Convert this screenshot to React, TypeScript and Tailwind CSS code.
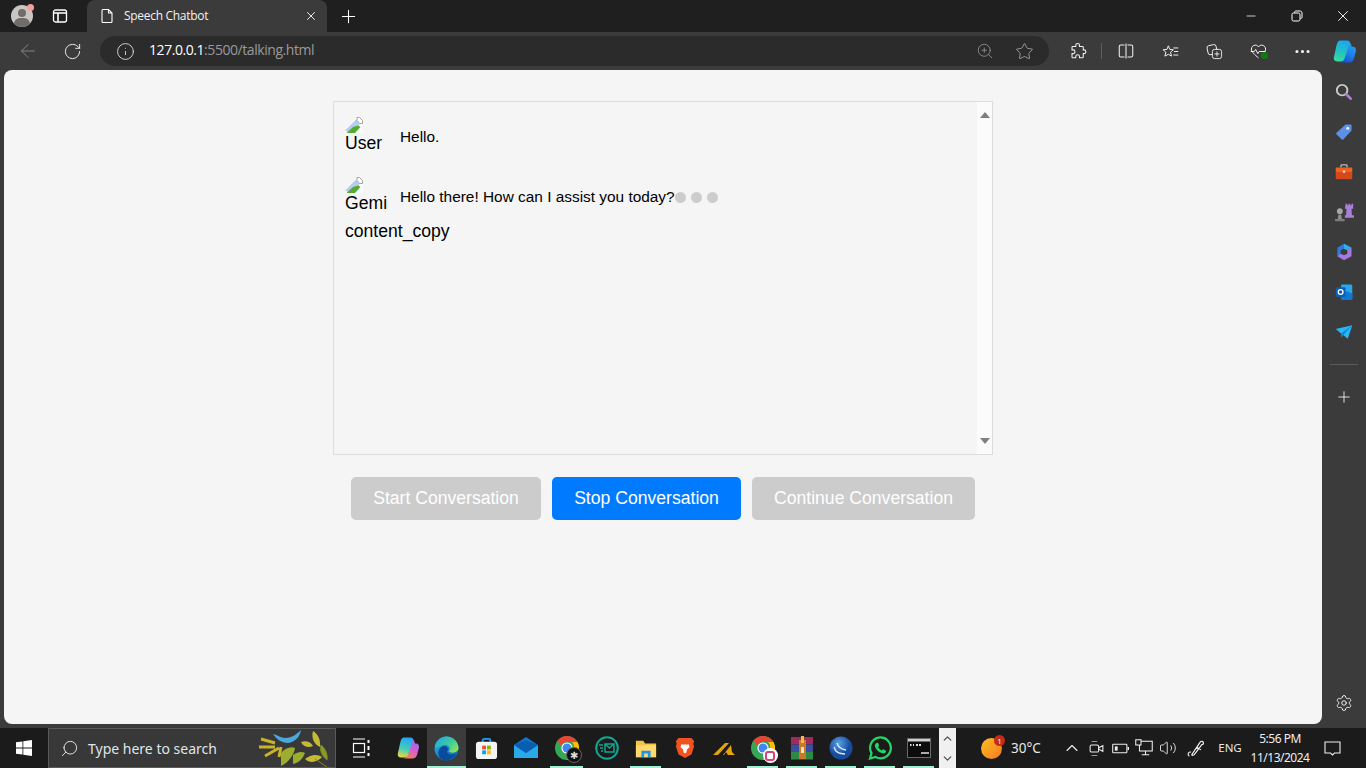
import React from "react";
import { ArrowLeft, RotateCw, Info, ZoomIn, Star, Plus, X, Minus, Search, Settings, Ellipsis, ChevronUp, ChevronDown, Volume2 } from "lucide-react";

const S = ({ w = 24, h, vb = "0 0 24 24", children, className }: { w?: number; h?: number; vb?: string; children: React.ReactNode; className?: string }) => (
  <svg width={w} height={h ?? w} viewBox={vb} className={"block shrink-0 " + (className ?? "")} fill="none">{children}</svg>
);

const BLADE_L = "M8 1.5h6.5c2 0 2.800 1 2.300 3L12 19c-.6 2-2 2.500-3.500 2.500H5c-2.500 0-3.800-1.800-3.200-4L4.500 5.500C5.200 3 6.300 1.500 8 1.500z";
const BLADE_R = "M15 2.500c1.500 0 2.800.8 3.300 2.500l.7 2.500h1c2.200 0 3.500 2 3 4l-2 7.500c-.7 2.500-2.500 3.500-4.500 3.500H7c2 0 4-1 4.700-3.500l3.800-13c.4-1.300 0-2.500-.5-3z";

function CopilotLogo({ size = 24, colorful }: { size?: number; colorful?: boolean }) {
  const a = colorful ? "cpa2" : "cpa";
  const b = colorful ? "cpb2" : "cpb";
  return (
    <S w={size}>
      <defs>
        <linearGradient id={a} x1="0.5" y1="0" x2="0.3" y2="1">
          <stop offset="0" stopColor={colorful ? "#2aa5f5" : "#1ba8ee"} />
          <stop offset=".55" stopColor={colorful ? "#3ed0b8" : "#22c3c0"} />
          <stop offset="1" stopColor={colorful ? "#f5d33c" : "#3cdc9c"} />
        </linearGradient>
        <linearGradient id={b} x1="0.7" y1="0" x2="0.3" y2="1">
          <stop offset="0" stopColor={colorful ? "#8a6df0" : "#2f9ff5"} />
          <stop offset=".55" stopColor={colorful ? "#d85fd0" : "#1e7fe8"} />
          <stop offset="1" stopColor={colorful ? "#f7804a" : "#1450d8"} />
        </linearGradient>
      </defs>
      <path d={BLADE_R} fill={`url(#${b})`} />
      <path d={BLADE_L} fill={`url(#${a})`} />
    </S>
  );
}

function EdgeLogo() {
  return (
    <S w={25}>
      <defs>
        <linearGradient id="edg" x1="0" y1="0" x2="0.8" y2="1"><stop offset="0" stopColor="#2cb5ee" /><stop offset="1" stopColor="#0d66b8" /></linearGradient>
        <linearGradient id="edt" x1="0" y1="0" x2="1" y2="0.7"><stop offset="0" stopColor="#1fa8e8" /><stop offset=".6" stopColor="#3cc9a0" /><stop offset="1" stopColor="#86e25c" /></linearGradient>
      </defs>
      <circle cx="12" cy="12" r="11.500" fill="url(#edg)" />
      <path d="M1 11C2 5 7 .5 12 .5c6 0 10.500 4.500 11.500 10 .4 3-2 5.500-5.500 5.500-2.500 0-4-1-4-1.500 1-.8 1.500-2 1-3.200C14 9 11 7.500 7.500 9 5 10 2.500 11 1 11z" fill="url(#edt)" />
      <path d="M9 23c-3.500-1.500-5.300-4.500-4.800-8 .5-3 3-5.500 5.800-5.500 2 0 3.500 1.500 3.500 3 0 1-.7 1.300-1 2-.4 2.500 3 3.500 5 3.500 1.500 0 3-.4 3.800-.9-2 3.900-5.800 6.200-9.300 6.400-1 .1-2 0-3-.5z" fill="#0a4a9a" />
    </S>
  );
}

function ChromeLogo({ badge }: { badge?: React.ReactNode }) {
  return (
    <div className="relative w-6 h-6">
      <S w={24}>
        <circle cx="12" cy="12" r="12" fill="#34a853" />
        <path d="M12 0a12 12 0 0 1 10.400 6H12a6 6 0 0 0-5.600 3.900L2.500 4.700A12 12 0 0 1 12 0z" fill="#ea4335" />
        <path d="M22.400 6A12 12 0 0 1 12 24l5.200-9A6 6 0 0 0 17 6z" fill="#fbbc04" />
        <circle cx="12" cy="12" r="5.600" fill="#fff" />
        <circle cx="12" cy="12" r="4.500" fill="#4285f4" />
      </S>
      {badge}
    </div>
  );
}

function BrokenImage() {
  return (
    <S w={18} h={16} vb="0 0 18 16">
      <path d="M0 16V12L11 1h3l4 4v11z" fill="#fbfbfd" />
      <path d="M0 13.500L11 2.500l3.500 3.500-.5 3L3 15z" fill="#b6cdf2" />
      <path d="M1.500 16L8 10l5-1.500 2.500 1.500L10 16z" fill="#55ab32" />
      <path d="M12 0.500h2.500l3 3v3h-3l-2.500-3z" fill="#fff" stroke="#9a9a9a" strokeWidth=".9" />
    </S>
  );
}

function Avatar({ alt }: { alt: string }) {
  return (
    <div className="w-[43px] h-10 overflow-hidden shrink-0 text-[17.6px] leading-[20px] text-black">
      <BrokenImage />
      <div className="whitespace-nowrap">{alt}</div>
    </div>
  );
}

function TabStrip() {
  return (
    <div className="h-8 bg-[#1f1f1f] flex items-stretch text-white shrink-0">
      <div className="w-[44px] flex items-center justify-center relative">
        <div className="relative w-[22px] h-[22px] rounded-full bg-[#c9c6c2] overflow-hidden">
          <div className="w-2 h-2 rounded-full bg-[#6f6d6b] mx-auto mt-1" />
          <div className="w-4 h-3 rounded-full bg-[#6f6d6b] mx-auto mt-[1px]" />
        </div>
        <span className="absolute left-[27px] top-[4px] w-[7px] h-[7px] rounded-full bg-[#f3a09c]" />
      </div>
      <div className="w-[43px] flex items-center">
        <S w={16} vb="0 0 16 16" className="ml-[8px]">
          <rect x="1.500" y="2" width="13" height="12" rx="2" stroke="#fff" strokeWidth="1.300" />
          <path d="M2 5h12M6 5v8.500" stroke="#fff" strokeWidth="1.600" />
        </S>
      </div>
      <div className="w-[240px] bg-[#3b3b3b] rounded-t-lg flex items-center pl-[12px] pr-[9px]">
        <S w={16} vb="0 0 16 16">
          <path d="M3 2.500c0-.6.4-1 1-1h5.500L13 5v8.500c0 .6-.4 1-1 1H4c-.6 0-1-.4-1-1z M9.500 1.500V5H13" stroke="#fff" strokeWidth="1.100" />
        </S>
        <span className="ml-[9px] text-[12px] tracking-[-0.3px] font-['Open_Sans','Noto_Sans',sans-serif] text-[#f2f2f2] flex-1">Speech Chatbot</span>
        <X size={14} strokeWidth={1.700} color="#eee" />
      </div>
      <div className="w-[42px] flex items-center justify-center">
        <Plus size={21} strokeWidth={1.200} color="#fff" />
      </div>
      <div className="flex-1" />
      <div className="flex items-center">
        <div className="w-[46px] flex justify-center"><Minus size={14} strokeWidth={1.300} color="#fff" /></div>
        <div className="w-[46px] flex justify-center">
          <S w={12} vb="0 0 12 12"><rect x="1" y="3" width="8" height="8" rx="1.500" stroke="#fff" /><path d="M3.500 3V2.500C3.500 1.500 4 1 5 1h4c1.200 0 2 .8 2 2v4c0 1-.5 1.500-1.500 1.500" stroke="#fff" /></S>
        </div>
        <div className="w-[46px] flex justify-center"><X size={18} strokeWidth={1.200} color="#fff" /></div>
      </div>
    </div>
  );
}

function Toolbar() {
  return (
    <div className="h-[38px] bg-[#3b3b3b] flex items-center shrink-0 pl-[6px]">
      <div className="w-11 shrink-0 flex justify-center"><ArrowLeft size={22} strokeWidth={1} color="#8a8a8a" /></div>
      <div className="w-11 shrink-0 flex justify-center"><RotateCw size={19} strokeWidth={1.200} color="#f0f0f0" /></div>
      <div className="ml-[6px] w-[949px] shrink-0 h-[30px] rounded-full bg-[#2b2b2b] flex items-center pl-[16px] pr-[15px]">
        <Info size={19} strokeWidth={1.100} color="#e6e6e6" />
        <span className="ml-[14px] text-[14px] leading-[18px] -mt-[2px] font-['Open_Sans','Noto_Sans',sans-serif] tracking-[-0.44px] flex-1">
          <span className="text-white">127.0.0.1</span><span className="text-[#9a9a9a]">:5500/talking.html</span>
        </span>
        <ZoomIn size={18} strokeWidth={1} color="#a0a0a0" />
        <Star size={19} strokeWidth={1} color="#b0b0b0" className="ml-[21px]" />
      </div>
      <div className="ml-[6px] flex items-center shrink-0">
        <div className="w-[46px] flex justify-center">
          <S w={18}><path d="M9 4.500a2.500 2.500 0 0 1 5 0V6h4a1 1 0 0 1 1 1v3.500h1a2.500 2.500 0 0 1 0 5h-1V20a1 1 0 0 1-1 1h-4v-1.500a2.500 2.500 0 0 0-5 0V21H5a1 1 0 0 1-1-1v-4.500h1.500a2.500 2.500 0 0 0 0-5H4V7a1 1 0 0 1 1-1h4z" stroke="#f0f0f0" strokeWidth="1.400" /></S>
        </div>
        <div className="w-px h-[16px] bg-[#5e5e5e]" />
        <div className="w-[46px] flex justify-center pl-[2px]">
          <S w={18}><path d="M10 4H5a2 2 0 0 0-2 2v12a2 2 0 0 0 2 2h5M14 4h5a2 2 0 0 1 2 2v12a2 2 0 0 1-2 2h-5M12 2v20" stroke="#f0f0f0" strokeWidth="1.400" /></S>
        </div>
        <div className="w-[44px] flex justify-center">
          <S w={17}><path d="M9 4l2 5 5 .5-4 3.500 1.500 5.500L9 16l-5 2.500L5.500 13 1.500 9.500 7 9z" stroke="#f0f0f0" strokeWidth="1.400" /><path d="M16 7h7M17 12h6M16 17h7" stroke="#f0f0f0" strokeWidth="1.400" /></S>
        </div>
        <div className="w-[44px] flex justify-center">
          <S w={17}><rect x="2" y="3" width="13" height="13" rx="3" stroke="#f0f0f0" strokeWidth="1.300" transform="rotate(-12 8 9)" /><rect x="9" y="9" width="13" height="13" rx="3" fill="#3b3b3b" stroke="#f0f0f0" strokeWidth="1.300" /><path d="M15.500 12v7M12 15.500h7" stroke="#f0f0f0" strokeWidth="1.300" /></S>
        </div>
        <div className="w-[44px] flex justify-center relative">
          <S w={17}><path d="M12 21C6 16 2 12.500 2 8.500 2 5.500 4.500 3 7.500 3 9.500 3 11 4 12 5.500 13 4 14.500 3 16.500 3 19.500 3 22 5.500 22 8.500c0 1-.2 2-.7 3" stroke="#f0f0f0" strokeWidth="1.400" /><path d="M1 12h5l2-3 3 6 2-3h9" stroke="#f0f0f0" strokeWidth="1.400" /></S>
          <span className="absolute left-[25px] top-[9px] w-[7px] h-[7px] rounded-full bg-[#107c10]" />
        </div>
        <div className="w-[44px] flex justify-center"><Ellipsis size={19} strokeWidth={2} color="#f0f0f0" /></div>
        <div className="w-[40px] flex justify-center"><CopilotLogo size={25} /></div>
      </div>
    </div>
  );
}

function Sidebar() {
  const Slot = ({ children }: { children: React.ReactNode }) => <div className="h-10 flex items-center justify-center">{children}</div>;
  return (
    <div className="w-[44px] bg-[#3b3b3b] flex flex-col items-center pt-[2px] pb-[1px]">
      <Slot><S w={18}><circle cx="9.500" cy="9.500" r="7" stroke="#c9c9c9" strokeWidth="2.600" /><path d="M15 15l6 6" stroke="#b07ae0" strokeWidth="3.400" strokeLinecap="round" /></S></Slot>
      <Slot><S w={18}><path d="M14 2h7c.6 0 1 .4 1 1v7L11 22c-.6.600-1.400.600-2 0L2 15c-.6-.6-.6-1.400 0-2z" fill="#5b8fe8" /><circle cx="17" cy="7" r="2" fill="#e8f0ff" /></S></Slot>
      <Slot><S w={18}><path d="M8 6V3.500C8 3 8.500 2.500 9 2.500h6c.5 0 1 .5 1 1V6" stroke="#b8b8b8" strokeWidth="1.800" /><path d="M1 6h22v6H1z" fill="#f0631f" /><path d="M1 12h22v8c0 1-.5 1.500-1.500 1.500h-19C1.500 21.500 1 21 1 20z" fill="#d4481a" /><rect x="10.500" y="10" width="3" height="3" fill="#ddd" /></S></Slot>
      <Slot><S w={20}><circle cx="7" cy="11" r="3.500" fill="#a6a6a6" /><path d="M4.500 21c0-3 1-5 1-6h3c0 1 1 3 1 6z" fill="#8f8f8f" /><rect x="1" y="20.500" width="12" height="2.500" rx="1" fill="#7e7e7e" /><path d="M14 2h2v2h1.500V2h2v2H21V2h2v6h-2l.5 8h-7l.5-8h-2zM13 16h11v3H13z" fill="#a880dc" /></S></Slot>
      <Slot>
        <S w={20}>
          <path d="M12 2l9 5-5 3-4-2-4 2v5l-4 2.500V7z" fill="#2f78e0" />
          <path d="M21 7v10l-9 5-8-5 4-3 4 2 4-2v-4z" fill="#a678e2" />
          <path d="M12 2l9 5-5 3-4-2z" fill="#2bb0ee" />
        </S>
      </Slot>
      <Slot>
        <S w={18}>
          <rect x="8" y="2" width="15" height="20" rx="1.500" fill="#28a8ea" />
          <path d="M8 14l7.500-3 7.500 3v8H8z" fill="#0f78d4" />
          <rect x="1" y="5.500" width="13" height="13" rx="1.500" fill="#0a5eb0" />
          <circle cx="7.500" cy="12" r="3.200" stroke="#fff" strokeWidth="1.700" />
        </S>
      </Slot>
      <Slot><S w={18}><path d="M1 8L23 3 17 21l-6-5-3 3v-5z" fill="#29b6f6" /><path d="M8 14L23 3l-12 13-3 3z" fill="#0c86cf" /></S></Slot>
      <div className="w-7 h-px bg-[#5a5a5a] mt-3" />
      <div className="h-10 mt-[12px] flex items-center justify-center"><Plus size={18} strokeWidth={1.200} color="#eee" /></div>
      <div className="flex-1" />
      <Slot><Settings size={18} strokeWidth={1.300} color="#eee" /></Slot>
    </div>
  );
}

function ChatPage() {
  const Btn = ({ label, active, w }: { label: string; active?: boolean; w: string }) => (
    <div className={"h-[43px] rounded-[5px] flex items-center justify-center text-white text-[17.6px] " + w + " " + (active ? "bg-[#007bff]" : "bg-[#cccccc]")}>{label}</div>
  );
  return (
    <div className="flex-1 bg-[#f5f5f5] rounded-lg ml-[4px] flex flex-col items-center pt-[31px] font-['Liberation_Sans',Arial,sans-serif]">
      <div className="w-[660px] h-[354px] border border-[#dddddd] flex">
        <div className="flex-1 pl-[11px] pt-[15px]">
          <div className="flex items-center h-10">
            <Avatar alt="User" />
            <span className="ml-[12px] text-[15.4px] text-black">Hello.</span>
          </div>
          <div className="flex items-center h-10 mt-5">
            <Avatar alt="Gemini" />
            <span className="ml-[12px] text-[15.4px] text-black">Hello there! How can I assist you today?</span>
            <span className="flex items-center gap-[5.4px]">
              <span className="w-[11px] h-[11px] rounded-full bg-[#cccccc]" />
              <span className="w-[11px] h-[11px] rounded-full bg-[#cccccc]" />
              <span className="w-[11px] h-[11px] rounded-full bg-[#cccccc]" />
            </span>
          </div>
          <div className="text-[17.6px] leading-[20px] text-black mt-[4px]">content_copy</div>
        </div>
        <div className="w-[15px] bg-[#fbfbfb] flex flex-col justify-between items-center py-[10px]">
          <div className="w-0 h-0 border-l-[5px] border-r-[5px] border-b-[6px] border-l-transparent border-r-transparent border-b-[#7f7f7f]" />
          <div className="w-0 h-0 border-l-[5px] border-r-[5px] border-t-[6px] border-l-transparent border-r-transparent border-t-[#7f7f7f]" />
        </div>
      </div>
      <div className="flex gap-[11px] mt-[22px]">
        <Btn label="Start Conversation" w="w-[190px]" />
        <Btn label="Stop Conversation" active w="w-[189px]" />
        <Btn label="Continue Conversation" w="w-[223px]" />
      </div>
    </div>
  );
}

function Slot({ w = "w-[39px]", line, active, children }: { w?: string; line?: boolean; active?: boolean; children: React.ReactNode }) {
  return (
    <div className={"relative h-full flex items-center justify-center shrink-0 " + w + (active ? " bg-[#3c3c3c]" : "")}>
      {children}
      {line && <span className={"absolute bottom-0 h-[2px] bg-[#9ff0d2] " + (active ? "left-0 right-0" : "left-[4px] right-[4px]")} />}
    </div>
  );
}

function Tray({ children, w = "w-6" }: { children: React.ReactNode; w?: string }) {
  return <div className={"flex items-center justify-center shrink-0 " + w}>{children}</div>;
}

function Taskbar() {
  return (
    <div className="h-[40px] bg-[#1b1b1b] flex items-stretch shrink-0 font-['Open_Sans','Noto_Sans',sans-serif] text-white">
      <div className="w-[48px] shrink-0 flex items-center justify-center">
        <S w={16} vb="0 0 16 16"><path d="M0 2.300l6.500-.9v6.200H0zM7.300 1.300L16 0v7.600H7.300zM0 8.400h6.500v6.200L0 13.700zM7.300 8.400H16V16l-8.700-1.200z" fill="#fff" /></S>
      </div>
      <div className="w-[288px] shrink-0 bg-[#383838] border border-[#5a5a5a] flex items-center pl-[11px] overflow-hidden">
        <Search size={19} strokeWidth={1.200} color="#e8e8e8" className="-scale-x-100" />
        <span className="ml-[9px] text-[14px] text-[#dfe5ea] font-['Noto_Sans','Open_Sans',sans-serif]">Type here to search</span>
        <div className="flex-1" />
        <svg width="72" height="38" viewBox="0 0 72 38" className="block shrink-0 mr-[4px]" fill="none">
          <path d="M14 5c5 1 8 4 12 4 6 0 11-3 16-8-1 7-6 12-13 13-6 0-12-4-15-9z" fill="#4aa8dc" />
          <path d="M2 10l14 4M0 18l16 0M6 27l14-8M22 18l-2 10" stroke="#c8b42a" strokeWidth="3" />
          <path d="M22 24c4-5 10-7 14-5-1 7-7 15-14 18zM34 26c4-3 9-4 12-2-2 5-6 10-12 11z" fill="#9cae2f" />
          <path d="M54 2c5 3 8 9 7 16-6-3-9-9-7-16zM46 30c6-5 13-5 17-2-4 5-12 7-17 2zM42 13c5-2 10 0 12 4-4 2-10 1-12-4z" fill="#c6b934" />
          <path d="M62 16c4 3 7 9 6 15-4-3-8-9-6-15zM56 30l12 8" stroke="#7a8a20" fill="#8a9a24" />
        </svg>
      </div>
      <div className="w-[50px] mr-[2px] shrink-0 flex items-center justify-center">
        <S w={20} vb="0 0 20 20"><path d="M2 1h12M2 19h12" stroke="#fff" strokeWidth="1.200" /><rect x="2.500" y="5.500" width="11" height="9" stroke="#fff" strokeWidth="1.200" /><path d="M17.500 2v3M17.500 8v4M17.500 15v3" stroke="#fff" strokeWidth="2" /></S>
      </div>
      <Slot><CopilotLogo colorful /></Slot>
      <Slot active line><EdgeLogo /></Slot>
      <Slot w="w-[40px]">
        <S w={23}><path d="M8 6V3.500C8 2.500 9 2 10 2h4c1 0 2 .5 2 1.500V6" stroke="#1da1f2" strokeWidth="1.800" /><rect x="1" y="5" width="22" height="18" rx="3" fill="#f4f4f4" /><rect x="7.500" y="9" width="4" height="4" fill="#f25022" /><rect x="12.500" y="9" width="4" height="4" fill="#7fba00" /><rect x="7.500" y="14" width="4" height="4" fill="#00a4ef" /><rect x="12.500" y="14" width="4" height="4" fill="#ffb900" /></S>
      </Slot>
      <Slot w="w-[40px]">
        <S w={24}><path d="M0 9L12 1l12 8v13H0z" fill="#0f78d4" /><path d="M0 9l12 8 12-8v13H0z" fill="#29a8ea" /><path d="M0 9l12 8 12-8-12-5z" fill="#0a5eb0" /></S>
      </Slot>
      <Slot w="w-[41px]" line>
        <ChromeLogo badge={<span className="absolute -right-[3px] -bottom-[3px] w-[16px] h-[16px] rounded-full bg-[#111] border border-[#666] flex items-center justify-center text-[10px] text-[#ddd]">✱</span>} />
      </Slot>
      <Slot>
        <S w={24}><circle cx="12" cy="12" r="10.800" stroke="#12a593" strokeWidth="2" /><path d="M10 8h9v8h-9zM10 8l4.500 4 4.500-4M4 9h4M5 12h3M6 15h2" stroke="#12a593" strokeWidth="1.500" /></S>
      </Slot>
      <Slot line>
        <S w={22}><path d="M1 4h8l2 3h12v15H1z" fill="#f5c542" /><path d="M1 9h22v13H1z" fill="#ffd970" /><rect x="7" y="15" width="10" height="7" fill="#1c97e6" /><rect x="10" y="18" width="4" height="4" fill="#ffd970" /></S>
      </Slot>
      <Slot>
        <S w={22}><path d="M5 1h14l3 3.500-1 3 1 2.500-3 9-7 4-7-4-3-9 1-2.500-1-3z" fill="#f2521f" /><path d="M8 8l3 .5 1-1 1 1 3-.5 1 3-3 3-.5 3-1.500 1-1.500-1-.5-3-3-3z" fill="#fff" /></S>
      </Slot>
      <Slot>
        <S w={24}><path d="M1 19L13 7h4L6 19zM11 19l8-10 1 7 3 3h-7l-2-3-2 3z" fill="#e5a50a" /></S>
      </Slot>
      <Slot line>
        <ChromeLogo badge={<span className="absolute -right-[3px] -bottom-[3px] w-[15px] h-[15px] rounded-full bg-[#fff] flex items-center justify-center"><span className="w-[10px] h-[10px] rounded-[3px] border-2 border-[#d6437a]" /></span>} />
      </Slot>
      <Slot line>
        <S w={24}><rect x="1" y="1" width="22" height="7.500" fill="#a02b5e" /><rect x="1" y="8.500" width="22" height="7.500" fill="#3b4ea0" /><rect x="1" y="16" width="22" height="7.500" fill="#2c8a45" /><rect x="9" y="4" width="7" height="19" fill="#c67a2a" /><rect x="11" y="0" width="3" height="7" fill="#f0c040" /><rect x="11" y="11" width="3" height="6" fill="#f4e2b8" /></S>
      </Slot>
      <Slot line>
        <S w={24}><defs><radialGradient id="blue" cx=".4" cy=".3"><stop offset="0" stopColor="#5aa2e6" /><stop offset="1" stopColor="#174b9c" /></radialGradient></defs><circle cx="12" cy="12" r="11.500" fill="url(#blue)" /><path d="M5 11c1 4 5 7 11 7M8 7c1 4 3 6 9 7" stroke="#dbe9fa" strokeWidth="1.300" /></S>
      </Slot>
      <Slot line>
        <S w={24}><path d="M2 22.500l1.500-5.400A10.400 10.400 0 1 1 7.500 21z" stroke="#25d366" strokeWidth="2.200" /><path d="M8.500 7c.5-.5 1.500-.5 1.800.3l.8 2c.1.400 0 .7-.3 1l-.7.800c.8 1.500 2 2.700 3.600 3.500l.9-1c.3-.3.600-.3 1-.2l2 1c.5.300.6.900.3 1.500-.6 1.200-2 1.700-3.300 1.400-4-.9-7-4-7.800-7.500C6.700 8.800 7.500 7.600 8.500 7z" fill="#25d366" /></S>
      </Slot>
      <Slot line>
        <S w={24}><rect x="0.500" y="2.500" width="23" height="19" fill="#0c0c0c" stroke="#6a6a6a" /><rect x="1" y="3" width="22" height="2.500" fill="#cfcfcf" /><path d="M3 9h1.500M6 9h1M9 9h2M12 9h2" stroke="#e0e0e0" strokeWidth="2" /><path d="M14 17h8" stroke="#e0e0e0" strokeWidth="1.500" /></S>
      </Slot>
      <div className="ml-[1px] w-[17px] bg-[#f0f0f0] flex flex-col items-center justify-center gap-[7px] shrink-0">
        <ChevronUp size={13} strokeWidth={2.500} color="#555" />
        <ChevronDown size={13} strokeWidth={2.500} color="#555" />
      </div>
      <div className="ml-[25px] flex items-center w-[75px] shrink-0">
        <div className="relative w-[21px] h-[21px] rounded-full bg-gradient-to-br from-[#fbbf24] to-[#f5761f]">
          <span className="absolute -right-[3px] -top-[3px] w-[11px] h-[11px] rounded-full bg-[#c42b1c] text-[8px] leading-[11px] text-center text-white">1</span>
        </div>
        <span className="ml-[9px] text-[13.5px] text-[#e8e8e8] font-['Noto_Sans','Open_Sans',sans-serif] whitespace-nowrap">30°C</span>
      </div>
      <div className="ml-[4px] flex items-stretch">
        <Tray><ChevronUp size={20} strokeWidth={1.300} color="#eee" /></Tray>
        <Tray><S w={17}><rect x="3" y="7" width="12" height="10" rx="2" stroke="#eee" strokeWidth="1.500" /><path d="M15 11l6-3v8l-6-3z" stroke="#eee" strokeWidth="1.500" /><path d="M5 2h8M5 22h8" stroke="#999" strokeWidth="1.500" /></S></Tray>
        <Tray><S w={17}><rect x="1" y="6" width="20" height="12" rx="1" stroke="#eee" strokeWidth="1.500" /><path d="M4 9v6h4V9z" fill="#eee" /><path d="M23 10v4" stroke="#eee" strokeWidth="2" /></S></Tray>
        <Tray><S w={18}><rect x="6" y="3" width="17" height="13" stroke="#eee" strokeWidth="1.400" /><rect x="1" y="1" width="7" height="7" fill="#1b1b1b" stroke="#eee" strokeWidth="1.400" /><path d="M14 16v5M9 21h10" stroke="#eee" strokeWidth="1.400" /></S></Tray>
        <Tray><Volume2 size={18} strokeWidth={1.200} color="#eee" /></Tray>
        <Tray w="w-[32px]"><S w={20}><path d="M4 22c-3-2-1-6 2-5M7 20L17 5c1-2 4-1 4 1 0 1-1 2-2 2L10 20c-1 1-3 1-3 0zM13 11l5 3" stroke="#eee" strokeWidth="1.400" /></S></Tray>
        <Tray w="w-[36px]"><span className="text-[11.5px] text-[#e8e8e8] font-['Noto_Sans','Open_Sans',sans-serif]">ENG</span></Tray>
        <div className="w-[64px] shrink-0 flex flex-col items-center justify-center text-[12px] tracking-[-0.5px] leading-[19px] text-[#eee] font-['Noto_Sans','Open_Sans',sans-serif]">
          <span>5:56 PM</span>
          <span className="whitespace-nowrap">11/13/2024</span>
        </div>
        <Tray w="w-[40px]">
          <S w={17} vb="0 0 17 17"><path d="M1 2h15v11H10.500L8.500 15 6.500 13H1z" stroke="#eee" strokeWidth="1.100" /></S>
        </Tray>
      </div>
    </div>
  );
}

export default function App() {
  return (
    <div className="w-[1366px] h-[768px] overflow-hidden bg-[#3b3b3b] flex flex-col">
      <TabStrip />
      <Toolbar />
      <div className="flex-1 flex min-h-0 pb-[4px]">
        <ChatPage />
        <Sidebar />
      </div>
      <Taskbar />
    </div>
  );
}
